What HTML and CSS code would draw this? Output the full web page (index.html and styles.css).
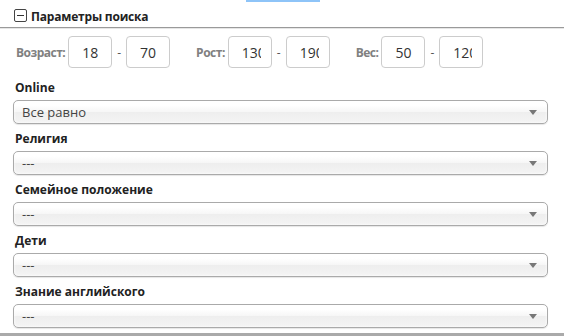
FILE: index.html
```html
<!DOCTYPE html>
<html lang="ru">
<head>
    <meta charset="UTF-8">
    <title>Параметры поиска</title>
    <link rel="stylesheet" href="styles.css">
</head>
<body>
    <div class="tab-marker"></div>

    <div class="section-head">
        <span class="toggle"></span>
        <span class="section-title">Параметры поиска</span>
    </div>

    <div class="ranges">
        <div class="range">
            <span class="range-label">Возраст:</span>
            <input class="num" type="text" value="18">
            <span class="dash">-</span>
            <input class="num" type="text" value="70">
        </div>
        <div class="range">
            <span class="range-label">Рост:</span>
            <input class="num" type="text" value="130">
            <span class="dash">-</span>
            <input class="num" type="text" value="190">
        </div>
        <div class="range">
            <span class="range-label">Вес:</span>
            <input class="num" type="text" value="50">
            <span class="dash">-</span>
            <input class="num" type="text" value="120">
        </div>
    </div>

    <div class="fields">
        <div class="field">
            <label class="field-label">Online</label>
            <div class="chosen"><span>Все равно</span></div>
        </div>
        <div class="field">
            <label class="field-label">Религия</label>
            <div class="chosen"><span>---</span></div>
        </div>
        <div class="field">
            <label class="field-label">Семейное положение</label>
            <div class="chosen"><span>---</span></div>
        </div>
        <div class="field">
            <label class="field-label">Дети</label>
            <div class="chosen"><span>---</span></div>
        </div>
        <div class="field">
            <label class="field-label">Знание английского</label>
            <div class="chosen"><span>---</span></div>
        </div>
    </div>

    <div class="next-section"></div>
</body>
</html>
```

FILE: styles.css
```css
body {
    margin: 0;
    font-family: "Open Sans", "DejaVu Sans", sans-serif;
    background: #fff;
    color: #222;
    overflow: hidden;
}
.tab-marker {
    width: 74px;
    height: 2px;
    margin-left: 246px;
    background-color: #8ec4f8;
}
.section-head {
    display: flex;
    align-items: center;
    gap: 4px;
    height: 25px;
    padding-left: 14px;
    border-bottom: 1px solid #9a9a9a;
    box-shadow: 0 1px 0 #e6e6e6;
}
.toggle {
    position: relative;
    width: 11px;
    height: 11px;
    border: 1px solid #444;
    border-radius: 2px;
    margin-top: 2px;
}
.toggle::after {
    content: "";
    position: absolute;
    left: 2px;
    right: 2px;
    top: 5px;
    height: 1px;
    background: #333;
}
.section-title {
    font-size: 12px;
    font-weight: bold;
    margin-top: 3px;
    letter-spacing: -0.2px;
}
.ranges {
    display: flex;
    padding: 8px 0 0 16px;
}
.range {
    display: flex;
    align-items: center;
    gap: 2px;
}
.range + .range {
    margin-left: 26px;
}
.range-label {
    font-size: 12px;
    font-weight: bold;
    color: #808080;
    letter-spacing: -0.5px;
    margin-right: 1px;
}
.num {
    width: 44px;
    height: 32px;
    box-sizing: border-box;
    border: 1px solid #ccc;
    border-radius: 4px;
    padding: 0 10px 0 13px;
    font-family: "Open Sans", "DejaVu Sans", sans-serif;
    font-size: 14px;
    color: #333;
    outline: none;
}
.dash {
    font-size: 12px;
    color: #555;
    padding: 0 3px;
}
.fields {
    padding-top: 5px;
}
.field {
    padding: 6px 16px 0 13px;
}
.field-label {
    display: block;
    font-size: 12px;
    font-weight: bold;
    line-height: 18px;
    padding-left: 2px;
    margin-bottom: 3px;
}
.chosen {
    position: relative;
    height: 24px;
    box-sizing: border-box;
    border: 1px solid #aaa;
    border-radius: 5px;
    background: linear-gradient(#fff 20%, #f6f6f6 50%, #eee 52%, #f4f4f4 100%);
    box-shadow: 0 0 3px #fff inset, 0 1px 1px rgba(0,0,0,0.1);
    padding-left: 8px;
    font-size: 13px;
    line-height: 22px;
    color: #444;
}
.chosen::after {
    content: "";
    position: absolute;
    right: 10px;
    top: 9px;
    border-left: 4px solid transparent;
    border-right: 4px solid transparent;
    border-top: 5px solid #777;
}
.next-section {
    margin-top: 5px;
    border-top: 3px solid #aaa;
}
```
